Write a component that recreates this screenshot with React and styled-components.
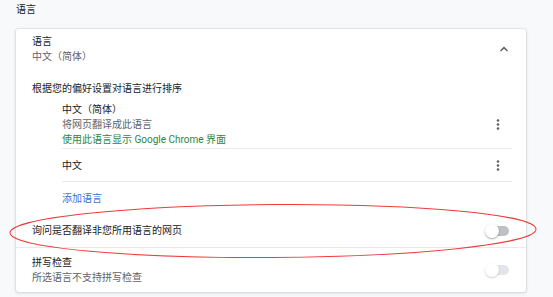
import React from "react";
import styled, { createGlobalStyle } from "styled-components";

const Global = createGlobalStyle`
  html, body { margin: 0; padding: 0; background: #f8f9fa; }
  body { font-family: Roboto, "Noto Sans CJK SC", sans-serif; font-size: 10px; color: #202124; }
`;

const Page = styled.div`
  position: relative;
  width: 553px;
  height: 297px;
  overflow: hidden;
  padding: 3px 0 0 16px;
  box-sizing: border-box;
`;

const Heading = styled.div`
  line-height: 14px;
  height: 14px;
  color: #202124;
  margin-bottom: 12px;
`;

const Card = styled.div`
  width: 510px;
  background: #fff;
  border-radius: 3px;
  box-shadow: 0 0 0 1px rgba(60, 64, 67, 0.07), 0 1px 3px 1px rgba(60, 64, 67, 0.1);
`;

const Header = styled.div`
  display: flex;
  align-items: center;
  justify-content: space-between;
  padding: 0 17px 0 16px;
  height: 40px;
`;

const Line = styled.div`
  line-height: 15px;
  color: ${(p) => p.$color || "#202124"};
`;

const Section = styled.div`
  padding: 12px 0 0 16px;
`;

const List = styled.div`
  margin: 5px 14px 0 46px;
`;

const Item = styled.div`
  display: flex;
  align-items: center;
  justify-content: space-between;
  padding-right: 12px;
  height: ${(p) => p.$h}px;
  border-bottom: ${(p) => (p.$divider ? "1px solid #e8eaed" : "none")};
  box-sizing: border-box;
`;

const Link = styled.div`
  color: #3c6fd8;
  line-height: 15px;
`;

const LinkRow = styled.div`
  display: flex;
  align-items: center;
  height: 32px;
  margin-left: 46px;
`;

const Row = styled.div`
  display: flex;
  align-items: center;
  justify-content: space-between;
  padding: 0 17px 0 16px;
  height: ${(p) => p.$h}px;
  border-bottom: ${(p) => (p.$divider ? "1px solid #e8eaed" : "none")};
  box-sizing: border-box;
`;

const Track = styled.div`
  position: relative;
  width: 21px;
  height: 10px;
  border-radius: 5px;
  background: ${(p) => (p.$disabled ? "#e3e5e8" : "#bdc1c6")};
`;

const Knob = styled.div`
  position: absolute;
  left: -3px;
  top: -2px;
  width: 14px;
  height: 14px;
  border-radius: 50%;
  background: #fff;
  box-shadow: 0 1px 2px rgba(0, 0, 0, ${(p) => (p.$disabled ? 0.2 : 0.35)});
`;

const Toggle = ({ disabled }) => (
  <Track $disabled={disabled}>
    <Knob $disabled={disabled} />
  </Track>
);

const Dots = () => (
  <svg width="4" height="11" viewBox="0 0 4 11">
    <circle cx="2" cy="1.5" r="1.3" fill="#5f6368" />
    <circle cx="2" cy="5.5" r="1.3" fill="#5f6368" />
    <circle cx="2" cy="9.5" r="1.3" fill="#5f6368" />
  </svg>
);

const Chevron = () => (
  <svg width="10" height="6" viewBox="0 0 10 6">
    <path d="M1.5 5 L5 1.6 L8.5 5" fill="none" stroke="#5f6368" strokeWidth="1.5" />
  </svg>
);

const Ellipse = styled.svg`
  position: absolute;
  left: 0;
  top: 0;
  pointer-events: none;
`;

export default function App() {
  return (
    <>
      <Global />
      <Page>
        <Heading>语言</Heading>
        <Card>
          <Header>
            <div>
              <Line>语言</Line>
              <Line $color="#675d6e">中文（简体）</Line>
            </div>
            <Chevron />
          </Header>
          <Section>
            <Line>根据您的偏好设置对语言进行排序</Line>
          </Section>
          <List>
            <Item $h={48} $divider>
              <div>
                <Line>中文（简体）</Line>
                <Line $color="#5f6368">将网页翻译成此语言</Line>
                <Line $color="#2e8540">使用此语言显示 Google Chrome 界面</Line>
              </div>
              <Dots />
            </Item>
            <Item $h={33} $divider>
              <Line>中文</Line>
              <Dots />
            </Item>
          </List>
          <LinkRow>
            <Link>添加语言</Link>
          </LinkRow>
          <Row $h={34} $divider>
            <Line>询问是否翻译非您所用语言的网页</Line>
            <Toggle />
          </Row>
          <Row $h={44}>
            <div>
              <Line>拼写检查</Line>
              <Line $color="#5f6368">所选语言不支持拼写检查</Line>
            </div>
            <Toggle disabled />
          </Row>
        </Card>
        <Ellipse width="553" height="297">
          <ellipse cx="273" cy="231" rx="263" ry="26.5" fill="none" stroke="#ee3b3b" strokeWidth="1" transform="rotate(-0.4 273 231)" />
        </Ellipse>
      </Page>
    </>
  );
}
